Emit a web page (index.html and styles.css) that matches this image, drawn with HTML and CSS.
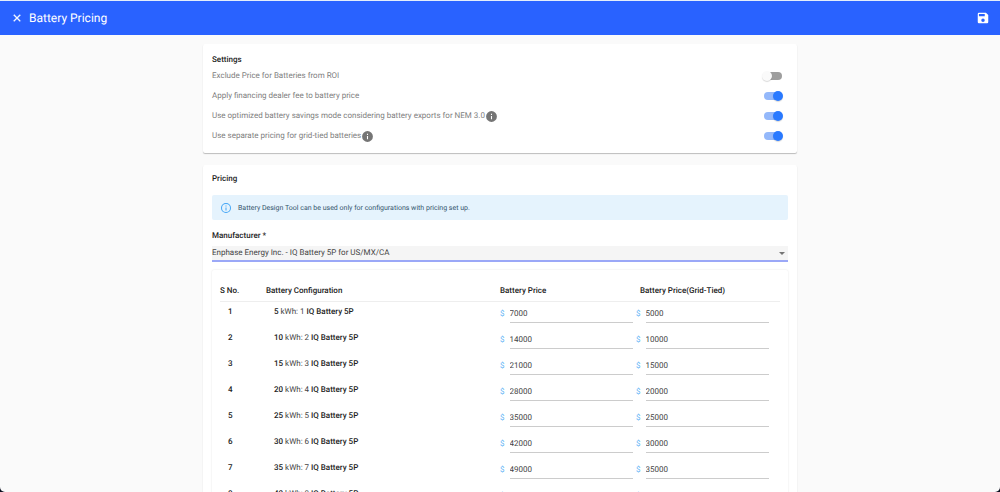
FILE: index.html
```
<!DOCTYPE html>
<html lang="en">
<head>
  <meta charset="utf-8">
  <title>Battery Pricing</title>
  <link rel="stylesheet" href="styles.css">
</head>
<body>
  <div class="app">
    <header class="toolbar">
      <button type="button" class="icon-btn" aria-label="Close">
        <svg width="14" height="14" viewBox="0 0 24 24"><path fill="currentColor" stroke="currentColor" stroke-width=".6" d="M18 7.2 16.8 6 12 10.8 7.2 6 6 7.2 10.8 12 6 16.8 7.2 18 12 13.2 16.8 18 18 16.8 13.2 12z"/></svg>
      </button>
      <h1>Battery Pricing</h1>
      <button type="button" class="icon-btn" aria-label="Save">
        <svg width="14" height="14" viewBox="0 0 24 24"><path fill="currentColor" d="M17 3H5a2 2 0 0 0-2 2v14a2 2 0 0 0 2 2h14a2 2 0 0 0 2-2V7l-4-4zm-5 16a3 3 0 1 1 0-6 3 3 0 0 1 0 6zm3-10H5V5h10v4z"/></svg>
      </button>
    </header>

    <main class="content">
      <section class="card settings">
        <h2>Settings</h2>
        <div class="setting">
          <label for="exclude-roi">Exclude Price for Batteries from ROI</label>
          <input type="checkbox" class="switch" id="exclude-roi">
        </div>
        <div class="setting">
          <label for="dealer-fee">Apply financing dealer fee to battery price</label>
          <input type="checkbox" class="switch" id="dealer-fee" checked>
        </div>
        <div class="setting">
          <label for="nem">Use optimized battery savings mode considering battery exports for NEM 3.0</label>
          <svg class="info" width="13" height="13" viewBox="0 0 24 24"><path fill="currentColor" d="M12 2a10 10 0 1 0 0 20 10 10 0 0 0 0-20zm1 15h-2v-6h2v6zm0-8h-2V7h2v2z"/></svg>
          <input type="checkbox" class="switch" id="nem" checked>
        </div>
        <div class="setting">
          <label for="grid-tied">Use separate pricing for grid-tied batteries</label>
          <svg class="info" width="13" height="13" viewBox="0 0 24 24"><path fill="currentColor" d="M12 2a10 10 0 1 0 0 20 10 10 0 0 0 0-20zm1 15h-2v-6h2v6zm0-8h-2V7h2v2z"/></svg>
          <input type="checkbox" class="switch" id="grid-tied" checked>
        </div>
      </section>

      <section class="card pricing">
        <h2>Pricing</h2>
        <div class="alert">
          <svg width="12" height="12" viewBox="0 0 24 24"><path fill="currentColor" d="M11 7h2v2h-2zm0 4h2v6h-2zm1-9a10 10 0 1 0 0 20 10 10 0 0 0 0-20zm0 18a8 8 0 1 1 0-16 8 8 0 0 1 0 16z"/></svg>
          <span>Battery Design Tool can be used only for configurations with pricing set up.</span>
        </div>

        <label class="field-label" for="manufacturer">Manufacturer *</label>
        <div class="select-wrap">
          <select id="manufacturer">
            <option>Enphase Energy Inc. - IQ Battery 5P for US/MX/CA</option>
          </select>
          <svg width="6" height="4" viewBox="0 0 6 4"><path fill="currentColor" d="M0 0h6L3 3z"/></svg>
        </div>

        <div class="table-card">
          <table>
            <thead>
              <tr>
                <th class="num">S No.</th>
                <th class="config">Battery Configuration</th>
                <th class="price">Battery Price</th>
                <th class="grid-price">Battery Price(Grid-Tied)</th>
              </tr>
            </thead>
            <tbody id="rows"></tbody>
          </table>
        </div>
      </section>
    </main>
  </div>

  <script src="script.js"></script>
</body>
</html>
```
FILE: styles.css
```
* { box-sizing: border-box; }
html { background: #0b1020; }
body { margin: 0; font-family: Roboto, "Open Sans", sans-serif; font-size: 8px; line-height: 12px; color: #444; text-rendering: geometricPrecision; }
h1, h2 { margin: 0; font-weight: 500; }
button, input, select { font: inherit; color: inherit; text-rendering: inherit; }

.app { display: flex; flex-direction: column; height: 100vh; overflow: hidden; background: #fafafa; border-radius: 0 0 5px 5px; }

/* top bar */
.toolbar { display: flex; align-items: center; flex: none; height: 35px; padding: 0 10px; background: #2962ff; border-top: 1px solid #e3edfb; color: #fff; }
.toolbar h1 { flex: 1; margin-left: 5px; font-size: 12px; line-height: 16px; font-weight: 400; }
.icon-btn { display: flex; padding: 0; border: none; background: none; cursor: pointer; }

.content { flex: 1; min-height: 0; overflow-y: auto; scrollbar-width: none; padding: 9px 16px; }
.card { max-width: 594px; margin: 0 auto 12px; padding: 8px 9px; background: #fff; border-radius: 2px; box-shadow: 0 1px 1px rgba(0,0,0,0.25); }
.card h2 { font-size: 8px; color: #222; }

/* settings */
.settings { padding-top: 10px; padding-bottom: 7px; }
.setting { display: flex; align-items: center; height: 20px; color: #808080; }
.info { color: #757575; }
.switch { appearance: none; position: relative; width: 18px; height: 8px; margin: 0 6px 0 auto; border-radius: 4px; background: #9e9e9e; cursor: pointer; }
.switch::before { content: ""; position: absolute; top: -1px; left: -2px; width: 10px; height: 10px; border-radius: 50%; background: #fafafa; box-shadow: 0 1px 1px rgba(0,0,0,0.15); }
.switch:checked { background: #94b8fa; }
.switch:checked::before { left: 9px; background: #2979ff; }

/* pricing */
.alert { display: flex; align-items: center; gap: 6px; height: 25px; margin-top: 10px; padding: 0 8px; background: #e5f3fd; border-radius: 2px; font-size: 7px; color: #35566d; }
.alert svg { color: #42a5f5; }
.field-label { display: block; margin-top: 10px; font-weight: 500; color: #222; }
.select-wrap { position: relative; margin-top: 4px; }
.select-wrap select { display: block; appearance: none; width: 100%; height: 16px; padding: 0; border: none; border-bottom: 2px solid #9ba8f7; border-radius: 0; outline: none; background: #f5f5f5; }
.select-wrap svg { position: absolute; right: 3px; top: 6px; color: #757575; pointer-events: none; }

.table-card { margin-top: 8px; padding: 11px 8px; border-radius: 2px; box-shadow: 0 0 2px rgba(0,0,0,0.12); }
table { width: 100%; table-layout: fixed; border-collapse: collapse; }
th, td { padding: 0; text-align: left; }
th { height: 20px; border-bottom: 1px solid #eee; font-weight: 500; color: #222; }
td { height: 26px; }
b { font-weight: 500; color: #222; }
.num { width: 46px; }
.config { width: 234px; }
.price { width: 136px; }
.grid-price { padding-left: 4px; }
td.num { padding: 0 0 4px 8px; }
td.config { padding: 0 0 4px 8px; }
.money { display: flex; align-items: center; gap: 5px; color: #64b5f6; }
.money input { width: 123px; height: 17px; padding: 0; border: none; border-bottom: 1px solid #ccc; outline: none; background: none; color: #444; }
```
FILE: script.js
```
const prices = [
  [7000, 5000],
  [14000, 10000],
  [21000, 15000],
  [28000, 20000],
  [35000, 25000],
  [42000, 30000],
  [49000, 35000],
  [56000, 40000]
];

document.getElementById('rows').innerHTML = prices.map(([price, grid], i) => {
  const n = i + 1;
  return `
    <tr>
      <td class="num"><b>${n}</b></td>
      <td class="config"><b>${n * 5}</b> kWh: ${n} <b>IQ Battery 5P</b></td>
      <td><label class="money">$ <input type="text" value="${price}" aria-label="Battery price ${n}"></label></td>
      <td><label class="money">$ <input type="text" value="${grid}" aria-label="Grid-tied price ${n}"></label></td>
    </tr>`;
}).join('');
```
